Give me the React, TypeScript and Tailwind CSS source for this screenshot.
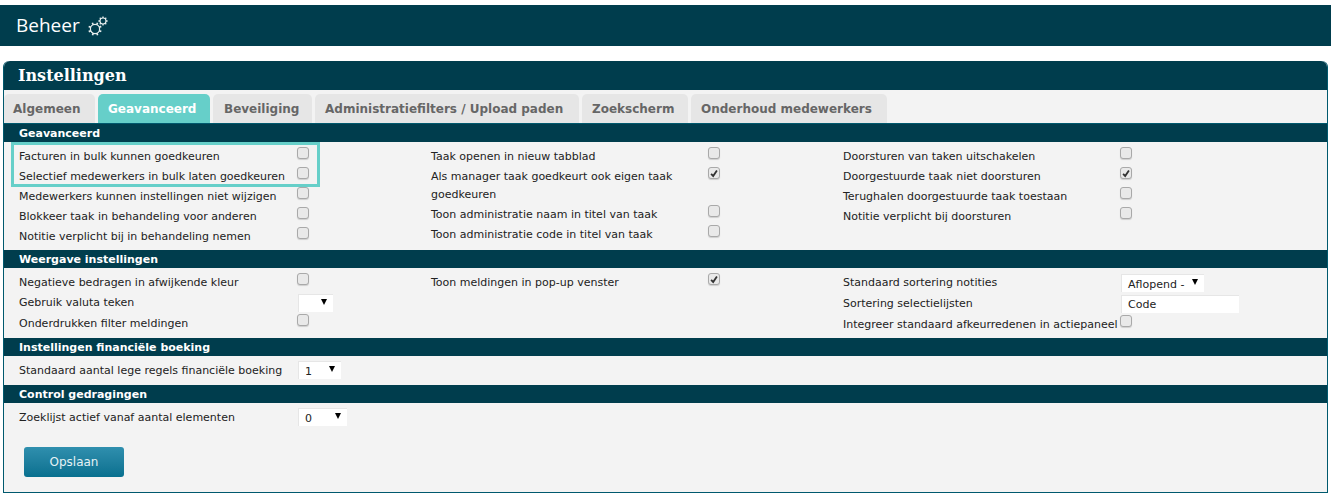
import React from 'react';

const sans = "font-['DejaVu_Sans',sans-serif]";

const Check = ({ on = false, shift = false }: { on?: boolean; shift?: boolean }) => (
  <span className={`mt-[1px] flex h-[12px] w-[12px] shrink-0 items-center justify-center rounded-[3px] border border-[#a9a9a9] bg-[#e9e9e9] shadow-[0_1px_1px_rgba(0,0,0,0.15)] ${shift ? '-ml-px' : ''}`}>
    {on && (
      <svg viewBox="0 0 12 12" className="h-[11px] w-[11px]">
        <path d="M2.5 6.5 L5 9 L9.5 2.5" fill="none" stroke="#333" strokeWidth="2.2" />
      </svg>
    )}
  </span>
);

const Select = ({ value, width, top = 'mt-[2px]' }: { value: string; width: string; top?: string }) => (
  <span className={`relative block h-[18px] ${top} ${width} border-l border-t border-[#e6e6e6] bg-white pl-[6px] pt-[2px] text-[11px] leading-[16px] text-[#222]`}>
    {value}
    <span className="absolute right-[6px] top-[4px] h-0 w-0 border-x-[3px] border-t-[6px] border-x-transparent border-t-black" />
  </span>
);

const Row = ({ label, children, h = 'h-[20px]' }: { label: string; children?: React.ReactNode; h?: string }) => (
  <div className={`flex ${h} items-start`}>
    <span className="w-[278px] shrink-0 pt-[2px] text-[11px] leading-[18px] text-[#222]">{label}</span>
    {children}
  </div>
);

const Bar = ({ title }: { title: string }) => (
  <div className="flex h-[18px] items-center bg-[#003d4d] pl-[15px] pt-[2px] text-[11px] font-bold text-white">{title}</div>
);

const angles = [0, 45, 90, 135, 180, 225, 270, 315];

const Gears = () => (
  <svg viewBox="0 0 23 22" className="ml-[7px] mt-[1px] h-[22px] w-[23px]" fill="none" stroke="#e8eeee">
    <circle cx="8" cy="14" r="4.6" strokeWidth="1.2" />
    {angles.map((a) => (
      <line key={a} x1="8" y1="9.4" x2="8" y2="7.2" strokeWidth="1.7" transform={`rotate(${a + 22} 8 14)`} />
    ))}
    <circle cx="16" cy="6" r="3" strokeWidth="1.1" />
    {angles.map((a) => (
      <line key={a} x1="16" y1="3" x2="16" y2="1.4" strokeWidth="1.3" transform={`rotate(${a} 16 6)`} />
    ))}
  </svg>
);

const tabs = [
  { label: 'Algemeen', cls: 'w-[91px] pl-[9px]' },
  { label: 'Geavanceerd', cls: 'w-[112px] pl-[10px]' },
  { label: 'Beveiliging', cls: 'w-[99px] pl-[11px]' },
  { label: 'Administratiefilters / Upload paden', cls: 'w-[264px] pl-[10px]' },
  { label: 'Zoekscherm', cls: 'w-[106px] pl-[10px]' },
  { label: 'Onderhoud medewerkers', cls: 'w-[196px] pl-[10px]' },
];

export default function App() {
  return (
    <div className={`h-[497px] w-[1331px] overflow-hidden bg-white pt-[5px] ${sans}`}>
      <div className="flex h-[41px] items-center bg-[#003d4d] pl-[16px] font-['Open_Sans',sans-serif] text-[19px] font-medium text-white">
        Beheer
        <Gears />
      </div>

      <div className="mx-[3px] mt-[15px] h-[432px] rounded-t-[6px] border border-t-0 border-[#00596e] bg-[#f3f3f3]">
        <div className="flex h-[29px] items-center rounded-t-[6px] bg-[#003d4d] pl-[14px] font-['DejaVu_Serif',serif] text-[16px] font-bold text-white">
          Instellingen
        </div>

        {/* tabs */}
        <div className="flex h-[33px] items-end gap-[3px]">
          {tabs.map((t) => (
            <div
              key={t.label}
              className={`flex h-[29px] items-center whitespace-nowrap rounded-t-[5px] text-[12px] font-bold ${t.cls} ${
                t.label === 'Geavanceerd' ? 'bg-[#66cfc9] text-white' : 'bg-[#e6e6e6] text-[#666]'
              }`}
            >
              {t.label}
            </div>
          ))}
        </div>

        <div className="h-px bg-[#00596e]" />
        <Bar title="Geavanceerd" />
        <div className="relative grid h-[108px] grid-cols-[412px_412px_1fr] pl-[15px] pt-[4px]">
          <div>
            <Row label="Facturen in bulk kunnen goedkeuren"><Check /></Row>
            <Row label="Selectief medewerkers in bulk laten goedkeuren"><Check /></Row>
            <Row label="Medewerkers kunnen instellingen niet wijzigen"><Check /></Row>
            <Row label="Blokkeer taak in behandeling voor anderen"><Check /></Row>
            <Row label="Notitie verplicht bij in behandeling nemen"><Check /></Row>
          </div>
          <div>
            <Row label="Taak openen in nieuw tabblad"><Check shift /></Row>
            <Row h="h-[38px]" label="Als manager taak goedkeurt ook eigen taak goedkeuren"><Check on shift /></Row>
            <Row label="Toon administratie naam in titel van taak"><Check shift /></Row>
            <Row label="Toon administratie code in titel van taak"><Check shift /></Row>
          </div>
          <div>
            <Row label="Doorsturen van taken uitschakelen"><Check shift /></Row>
            <Row label="Doorgestuurde taak niet doorsturen"><Check on shift /></Row>
            <Row label="Terughalen doorgestuurde taak toestaan"><Check shift /></Row>
            <Row label="Notitie verplicht bij doorsturen"><Check shift /></Row>
          </div>
          {/* highlight round the first two rows */}
          <div className="absolute left-[7px] top-0 h-[45px] w-[309px] border-[3px] border-[#66cfc9]" />
        </div>

        <Bar title="Weergave instellingen" />
        <div className="grid h-[70px] grid-cols-[412px_412px_1fr] pl-[15px] pt-[4px]">
          <div>
            <Row label="Negatieve bedragen in afwijkende kleur"><Check /></Row>
            <Row h="h-[21px]" label="Gebruik valuta teken"><Select value="" width="ml-px w-[35px]" /></Row>
            <Row label="Onderdrukken filter meldingen"><Check /></Row>
          </div>
          <div>
            <Row label="Toon meldingen in pop-up venster"><Check on shift /></Row>
          </div>
          <div>
            <Row h="h-[21px]" label="Standaard sortering notities"><Select value="Aflopend -" width="w-[83px]" /></Row>
            <Row h="h-[21px]" label="Sortering selectielijsten">
              <span className="mt-[2px] block h-[18px] w-[118px] border-l border-t border-[#e6e6e6] bg-white pl-[6px] pt-px text-[11px] leading-[16px] text-[#222]">Code</span>
            </Row>
            <Row label="Integreer standaard afkeurredenen in actiepaneel"><Check shift /></Row>
          </div>
        </div>

        <Bar title="Instellingen financiële boeking" />
        <div className="h-[29px] pl-[15px] pt-[4px]">
          <Row label="Standaard aantal lege regels financiële boeking"><Select value="1" width="ml-px w-[43px]" top="mt-[1px]" /></Row>
        </div>

        <Bar title="Control gedragingen" />
        <div className="pl-[15px] pt-[4px]">
          <Row label="Zoeklijst actief vanaf aantal elementen"><Select value="0" width="ml-px w-[49px]" top="mt-[1px]" /></Row>
        </div>

        <button className="ml-[20px] mt-[20px] h-[30px] w-[100px] rounded-[3px] bg-gradient-to-b from-[#2f8fae] to-[#07708f] text-[12px] text-[#e6f2f5]">
          Opslaan
        </button>
      </div>
    </div>
  );
}
